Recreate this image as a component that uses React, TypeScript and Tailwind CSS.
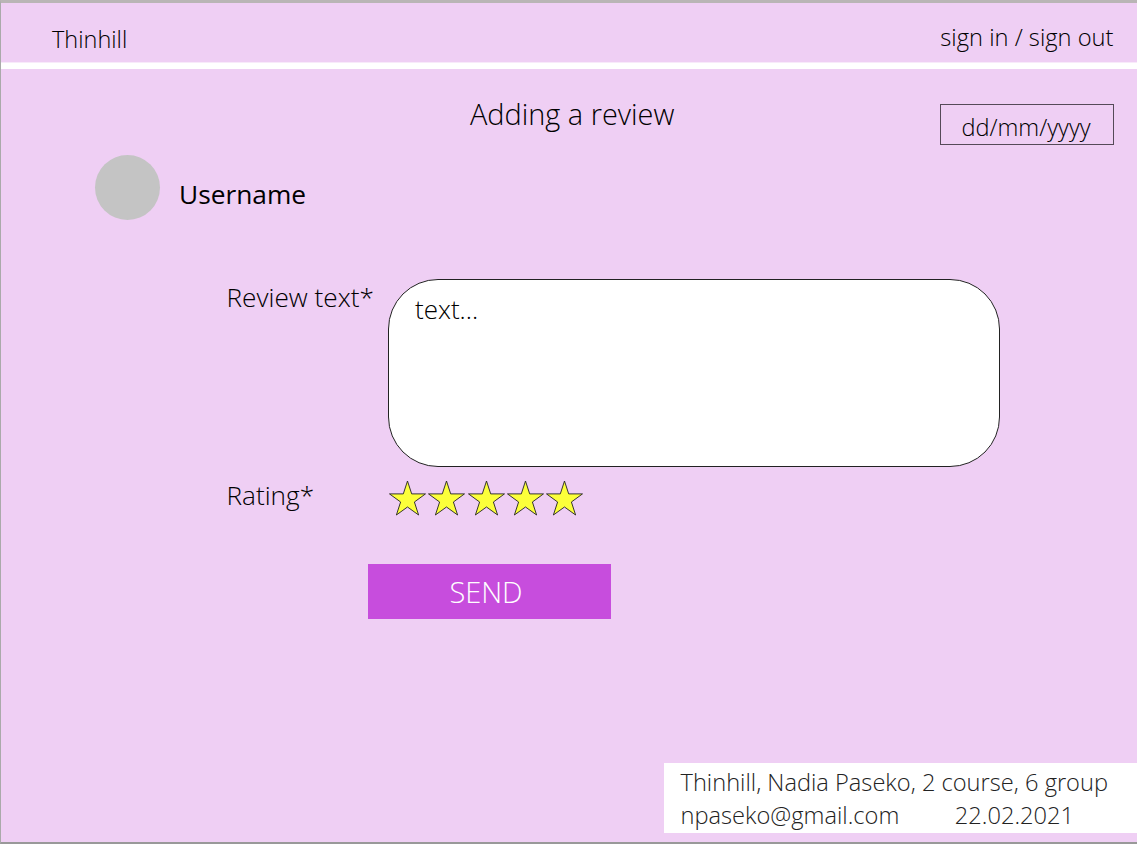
function Star() {
  return (
    <svg className="h-[38px] w-[39.3px]" viewBox="0 0 39.3 38" fill="#fcff3a" stroke="#222" strokeWidth="0.9">
      <path d="M19.5 1 L23.7 13.9 H37.5 L26.4 22 L30.6 35 L19.5 27 L8.4 35 L12.6 22 L1.5 13.9 H15.3 Z" />
    </svg>
  );
}

export default function App() {
  return (
    <div className="flex h-[844px] w-[1137px] flex-col overflow-hidden border-t-[3px] border-b-2 border-l border-t-[#b9b5b5] border-b-[#999] border-l-[#aaa] bg-[#efcff4] font-['Open_Sans',sans-serif] font-light text-black">
      <header className="flex h-[59px] shrink-0 justify-between pr-[23.5px] pl-[51px] leading-[30px]">
        <div className="pt-[21px] text-[23.5px]">Thinhill</div>
        <div className="pt-[19px] text-[23.7px]">sign in / sign out</div>
      </header>
      <div className="h-[7px] shrink-0 border-t border-[#f8eafa] bg-white" />
      <div className="flex h-[86px] shrink-0 items-start justify-between pr-[23px] pl-[469px]">
        <h1 className="pt-[25px] text-[28.9px] leading-[40px]">Adding a review</h1>
        <div className="mt-[35px] h-[41px] w-[174px] border border-[#554a58] pt-[7px] pr-[2px] text-center text-[23.6px] leading-[30px]">dd/mm/yyyy</div>
      </div>
      <div className="flex h-[124px] shrink-0 items-start gap-5 pl-[94px]">
        <div className="size-[65px] rounded-full bg-[#c4c4c4]" />
        <div className="-ml-px pt-[19px] text-[26.3px] leading-[40px] font-normal">Username</div>
      </div>
      <div className="flex h-[201px] shrink-0 pl-[225.5px]">
        <label className="w-[161.5px] shrink-0 pt-[3px] text-[26.2px] leading-[30px]">Review text*</label>
        <div className="h-[188px] w-[612px] rounded-[50px] border border-[#222] bg-white pt-[14px] pl-[26px] text-[26px] leading-[30px]">text...</div>
      </div>
      <div className="flex h-[84px] shrink-0 pl-[225.5px]">
        <div className="w-[161.5px] text-[26.2px] leading-[30px]">Rating*</div>
        <div className="flex">
          <Star /><Star /><Star /><Star /><Star />
        </div>
      </div>
      <button className="ml-[367px] h-[55px] w-[243px] shrink-0 bg-[#c74ddd] pt-[8px] pr-[7px] pb-[7px] text-[29px] leading-[40px] text-white">SEND</button>
      <footer className="mt-auto mb-[9px] ml-auto h-[70px] w-[473.5px] shrink-0 bg-white pt-[3px] pl-[17px] text-[23.65px] leading-[33px] whitespace-nowrap text-[#222]">
        <div>Thinhill, Nadia Paseko, 2 course, 6 group</div>
        <div className="flex gap-[55.5px]">
          <span>npaseko@gmail.com</span>
          <span>22.02.2021</span>
        </div>
      </footer>
    </div>
  );
}
